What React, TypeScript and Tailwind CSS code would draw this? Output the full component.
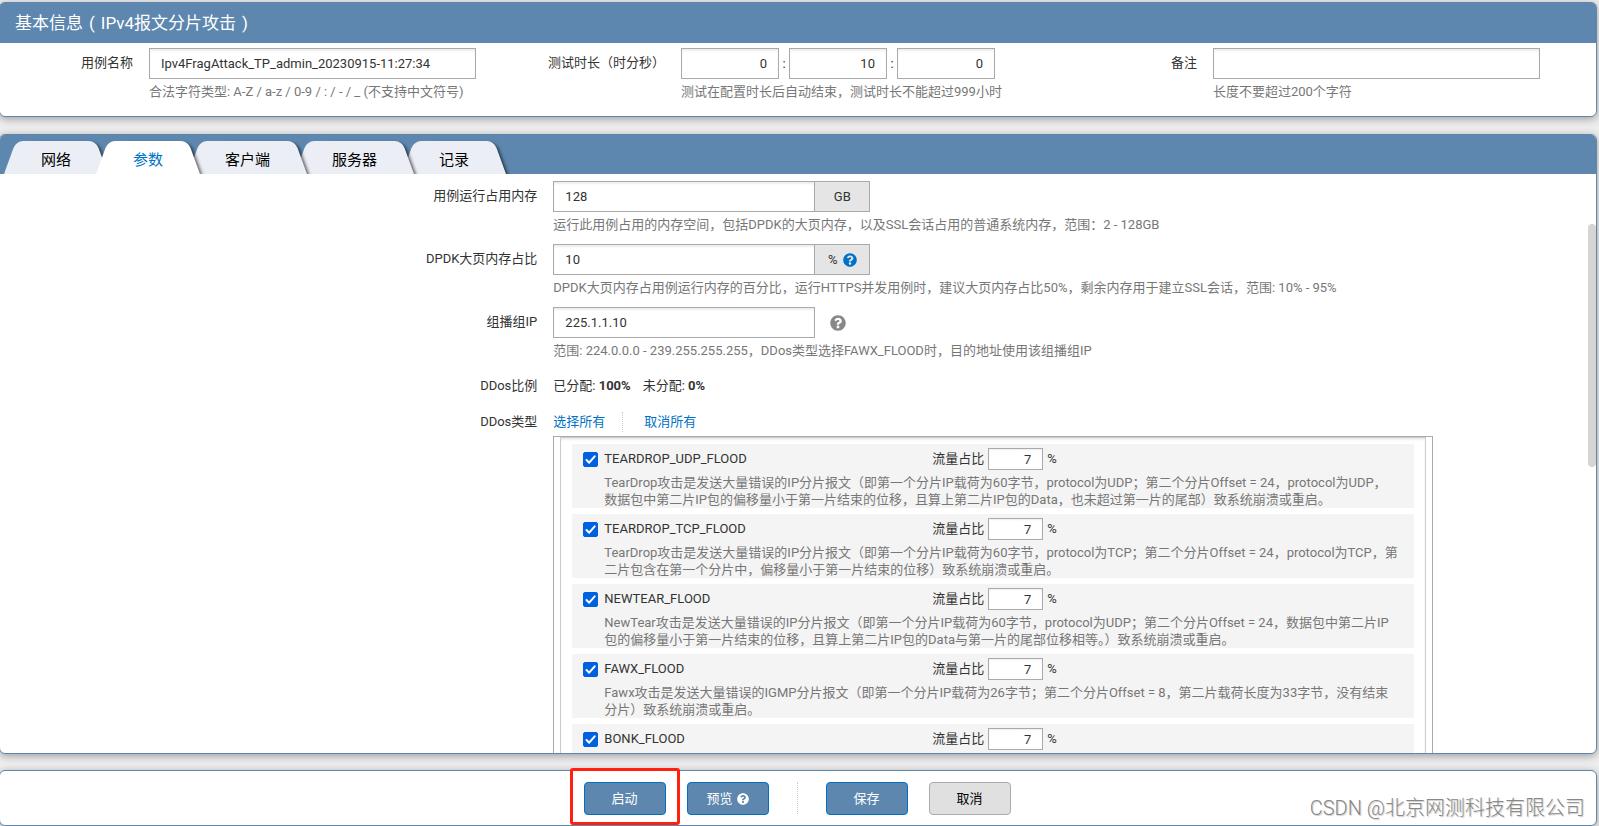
import { useState } from "react";
import { FaQuestionCircle } from "react-icons/fa";

interface Flood {
  name: string;
  desc: string;
}

const TABS = [
  { label: "网络",   z: "z-10" },
  { label: "参数",   z: "z-40" },
  { label: "客户端", z: "z-30" },
  { label: "服务器", z: "z-20" },
  { label: "记录",   z: "z-10" },
];

const FLOODS: Flood[] = [
  {
    name: "TEARDROP_UDP_FLOOD",
    desc: "TearDrop攻击是发送大量错误的IP分片报文（即第一个分片IP载荷为60字节，protocol为UDP；第二个分片Offset = 24，protocol为UDP，\n数据包中第二片IP包的偏移量小于第一片结束的位移，且算上第二片IP包的Data，也未超过第一片的尾部）致系统崩溃或重启。",
  },
  {
    name: "TEARDROP_TCP_FLOOD",
    desc: "TearDrop攻击是发送大量错误的IP分片报文（即第一个分片IP载荷为60字节，protocol为TCP；第二个分片Offset = 24，protocol为TCP，第\n二片包含在第一个分片中，偏移量小于第一片结束的位移）致系统崩溃或重启。",
  },
  {
    name: "NEWTEAR_FLOOD",
    desc: "NewTear攻击是发送大量错误的IP分片报文（即第一个分片IP载荷为60字节，protocol为UDP；第二个分片Offset = 24，数据包中第二片IP\n包的偏移量小于第一片结束的位移，且算上第二片IP包的Data与第一片的尾部位移相等。）致系统崩溃或重启。",
  },
  {
    name: "FAWX_FLOOD",
    desc: "Fawx攻击是发送大量错误的IGMP分片报文（即第一个分片IP载荷为26字节；第二个分片Offset = 8，第二片载荷长度为33字节，没有结束\n分片）致系统崩溃或重启。",
  },
  { name: "BONK_FLOOD", desc: "" },
];

const input =
  "h-[31px] border border-[#aaa] bg-white px-[11px] text-[#333] shadow-[inset_0_2px_2px_#eee] outline-none";
const panel = "-ml-px mr-[2px] border border-[#5d87af] bg-white shadow-[0_2px_8px_rgba(0,0,0,0.35)]";
const button = "flex h-[33px] w-[82px] items-center justify-center gap-1 rounded-[4px] border";
const primary = "border-[#0070c6] bg-[#5d87af] text-white";

function Hint({ children }: { children: React.ReactNode }) {
  return <p className="mt-1 leading-[18px] whitespace-nowrap text-[#777]">{children}</p>;
}

function InfoField({ label, id, hint, children }: { label: string; id: string; hint: string; children: React.ReactNode }) {
  return (
    <div className="flex w-1/3">
      <label htmlFor={id} className="w-1/4 shrink-0 text-right leading-[30px] whitespace-nowrap">{label}</label>
      <div className="w-2/3 pr-3 pl-4">
        {children}
        <Hint>{hint}</Hint>
      </div>
    </div>
  );
}

function FormRow({ label, id, children }: { label: string; id?: string; children: React.ReactNode }) {
  return (
    <div className="flex gap-4">
      <label htmlFor={id} className="w-1/3 shrink-0 text-right">{label}</label>
      <div className="min-w-0">{children}</div>
    </div>
  );
}

function FloodItem({ name, desc }: Flood) {
  const [checked, setChecked] = useState(true);
  const [share, setShare] = useState("7");

  return (
    <div className="mb-[6px] h-16 bg-[#f4f4f4] pt-1">
      <div className="flex h-[22px] items-center">
        <label className="flex w-[360px] items-center gap-[6px] pl-[11px]">
          <span className="relative size-[15px]">
            <input
              type="checkbox"
              checked={checked}
              onChange={(e) => setChecked(e.target.checked)}
              className="block size-[15px] appearance-none rounded-[2px] border border-[#8f8f9d] bg-white checked:border-[#0061e0] checked:bg-[#0061e0]"
            />
            {checked && (
              <svg viewBox="0 0 15 15" className="pointer-events-none absolute inset-0 size-[15px]">
                <path d="M3.5 8l2.7 2.7L11.7 4.3" fill="none" stroke="#fff" strokeWidth="2" strokeLinecap="round" strokeLinejoin="round" />
              </svg>
            )}
          </span>
          {name}
        </label>
        <label className="flex items-center gap-1">
          流量占比
          <input
            value={share}
            onChange={(e) => setShare(e.target.value)}
            className="h-[22px] w-[55px] border border-[#aaa] bg-white pr-[11px] text-right shadow-[inset_0_1px_2px_#eee] outline-none"
          />
        </label>
        <span className="ml-1">%</span>
      </div>
      <p className="mt-1 pl-8 leading-[17px] whitespace-pre text-[#777]">{desc}</p>
    </div>
  );
}

export default function App() {
  const [tab, setTab] = useState("参数");

  return (
    <div className="relative flex h-screen flex-col overflow-hidden bg-[#eee] pt-[2px] font-[Roboto,'Noto_Sans_CJK_SC',sans-serif] text-[13px] leading-5 text-[#333]">
      {/* Basic info */}
      <section className={`${panel} rounded-[6px]`}>
        <h1 className="flex h-10 gap-[6px] rounded-t-[4px] bg-[#5d87af] pl-[15px] text-[17px] leading-10 font-normal text-white">
          <span>基本信息</span>
          <span>(</span>
          <span>IPv4报文分片攻击</span>
          <span>)</span>
        </h1>
        <div className="flex pt-[5px] pb-[15px]">
          <InfoField label="用例名称" id="name" hint="合法字符类型: A-Z / a-z / 0-9 / : / - / _ (不支持中文符号)">
            <input id="name" defaultValue="Ipv4FragAttack_TP_admin_20230915-11:27:34" className={`${input} block w-full`} />
          </InfoField>
          <InfoField label="测试时长（时分秒）" id="hours" hint="测试在配置时长后自动结束，测试时长不能超过999小时">
            <div className="flex h-[31px] items-center">
              <input id="hours" defaultValue="0" className={`${input} w-[98px] text-right`} />
              <span className="w-[10px] text-center">:</span>
              <input aria-label="分" defaultValue="10" className={`${input} w-[98px] text-right`} />
              <span className="w-[10px] text-center">:</span>
              <input aria-label="秒" defaultValue="0" className={`${input} w-[98px] text-right`} />
            </div>
          </InfoField>
          <InfoField label="备注" id="remark" hint="长度不要超过200个字符">
            <input id="remark" className={`${input} block w-full`} />
          </InfoField>
        </div>
      </section>

      {/* Tabs + parameters */}
      <section className={`${panel} relative mt-[17px] flex min-h-0 flex-1 flex-col overflow-hidden rounded-[6px]`}>
        <div className="flex h-[39px] shrink-0 overflow-hidden bg-[#5d87af] pt-[6px] pl-1">
          {TABS.map((t) => {
            const fill = t.label === tab ? "text-[#0072c6] before:bg-white after:bg-white" : "text-black before:bg-[#ebeef4] after:bg-[#ebeef4]";
            return (
              <button
                key={t.label}
                type="button"
                onClick={() => setTab(t.label)}
                className={`relative isolate -mr-3 h-[33px] px-[37px] pt-1 text-[15px] before:absolute before:inset-y-0 before:left-0 before:-z-10 before:w-3/5 before:origin-bottom-left before:-skew-x-20 before:rounded-tl-[7px] after:absolute after:inset-y-0 after:right-0 after:-z-20 after:w-3/5 after:origin-bottom-right after:skew-x-20 after:rounded-tr-[7px] after:shadow-[2px_2px_3px_rgba(0,0,0,0.55)] ${fill} ${t.z}`}
              >
                {t.label}
              </button>
            );
          })}
        </div>

        <div className="min-h-0 flex-1 overflow-hidden pt-[7px] pl-2">
          <div className="h-[63px] leading-[30px]">
            <FormRow label="用例运行占用内存" id="memory">
              <div className="flex">
                <input id="memory" defaultValue="128" className={`${input} w-[262px]`} />
                <span className="-ml-px h-[31px] w-14 border border-[#aaa] bg-[#e5e5e5] text-center leading-[29px]">GB</span>
              </div>
              <Hint>运行此用例占用的内存空间，包括DPDK的大页内存，以及SSL会话占用的普通系统内存，范围：2 - 128GB</Hint>
            </FormRow>
          </div>
          <div className="h-[63px] leading-[30px]">
            <FormRow label="DPDK大页内存占比" id="hugepage">
              <div className="flex">
                <input id="hugepage" defaultValue="10" className={`${input} w-[262px]`} />
                <span className="-ml-px flex h-[31px] w-14 items-center justify-center gap-[5px] border border-[#aaa] bg-[#e5e5e5]">
                  % <FaQuestionCircle size={14} className="text-[#0072c6]" />
                </span>
              </div>
              <Hint>DPDK大页内存占用例运行内存的百分比，运行HTTPS并发用例时，建议大页内存占比50%，剩余内存用于建立SSL会话，范围: 10% - 95%</Hint>
            </FormRow>
          </div>
          <div className="h-[63px] leading-[30px]">
            <FormRow label="组播组IP" id="multicast">
              <div className="flex h-[31px] items-center gap-[15px]">
                <input id="multicast" defaultValue="225.1.1.10" className={`${input} w-[262px]`} />
                <FaQuestionCircle size={16} className="text-[#888]" />
              </div>
              <Hint>范围: 224.0.0.0 - 239.255.255.255，DDos类型选择FAWX_FLOOD时，目的地址使用该组播组IP</Hint>
            </FormRow>
          </div>
          <div className="space-y-4 pt-[6px]">
            <FormRow label="DDos比例">
              <span className="mr-3">已分配: <b>100%</b></span>
              <span>未分配: <b>0%</b></span>
            </FormRow>
            <FormRow label="DDos类型">
              <div className="flex text-[#0072c6]">
                <a href="#all" className="mr-[17px]">选择所有</a>
                <span className="mr-[21px] border-l border-dotted border-[#ccc]" />
                <a href="#none">取消所有</a>
              </div>
              <div className="mt-1 w-[880px] border border-[#aaa] px-[6px]">
                <div className="border border-[#ccc] px-[11px] pt-[6px] shadow-[inset_0_2px_2px_#eee]">
                  {FLOODS.map((f) => (
                    <FloodItem key={f.name} {...f} />
                  ))}
                </div>
              </div>
            </FormRow>
          </div>
        </div>

        {/* Scrollbar thumb */}
        <div className="absolute top-[89px] right-0 h-[243px] w-2 rounded-full bg-[#d5d5d5]" />
      </section>

      {/* Actions */}
      <footer className={`${panel} mt-4 flex h-14 shrink-0 justify-center rounded-[6px] pt-[11px] pr-[2px]`}>
        <div className="relative mr-[21px] h-[33px]">
          <button type="button" className={`${button} ${primary}`}>启动</button>
          <span className="pointer-events-none absolute -inset-x-[14px] -top-[14px] -bottom-[10px] rounded-[3px] border-3 border-[#ff2010]" />
        </div>
        <button type="button" className={`${button} ${primary}`}>
          预览 <FaQuestionCircle size={12} />
        </button>
        <span className="mx-7 h-8 border-l border-dotted border-[#ccc]" />
        <button type="button" className={`${button} ${primary}`}>保存</button>
        <button type="button" className={`${button} ml-[21px] border-[#aaa] bg-[#e0e0e0] text-black`}>取消</button>
      </footer>

      <p className="pointer-events-none absolute right-[14px] bottom-1 text-[20px] leading-7 font-light whitespace-nowrap text-[#888] [text-shadow:1px_1px_1px_#ccc]">
        CSDN @北京网测科技有限公司
      </p>
    </div>
  );
}
